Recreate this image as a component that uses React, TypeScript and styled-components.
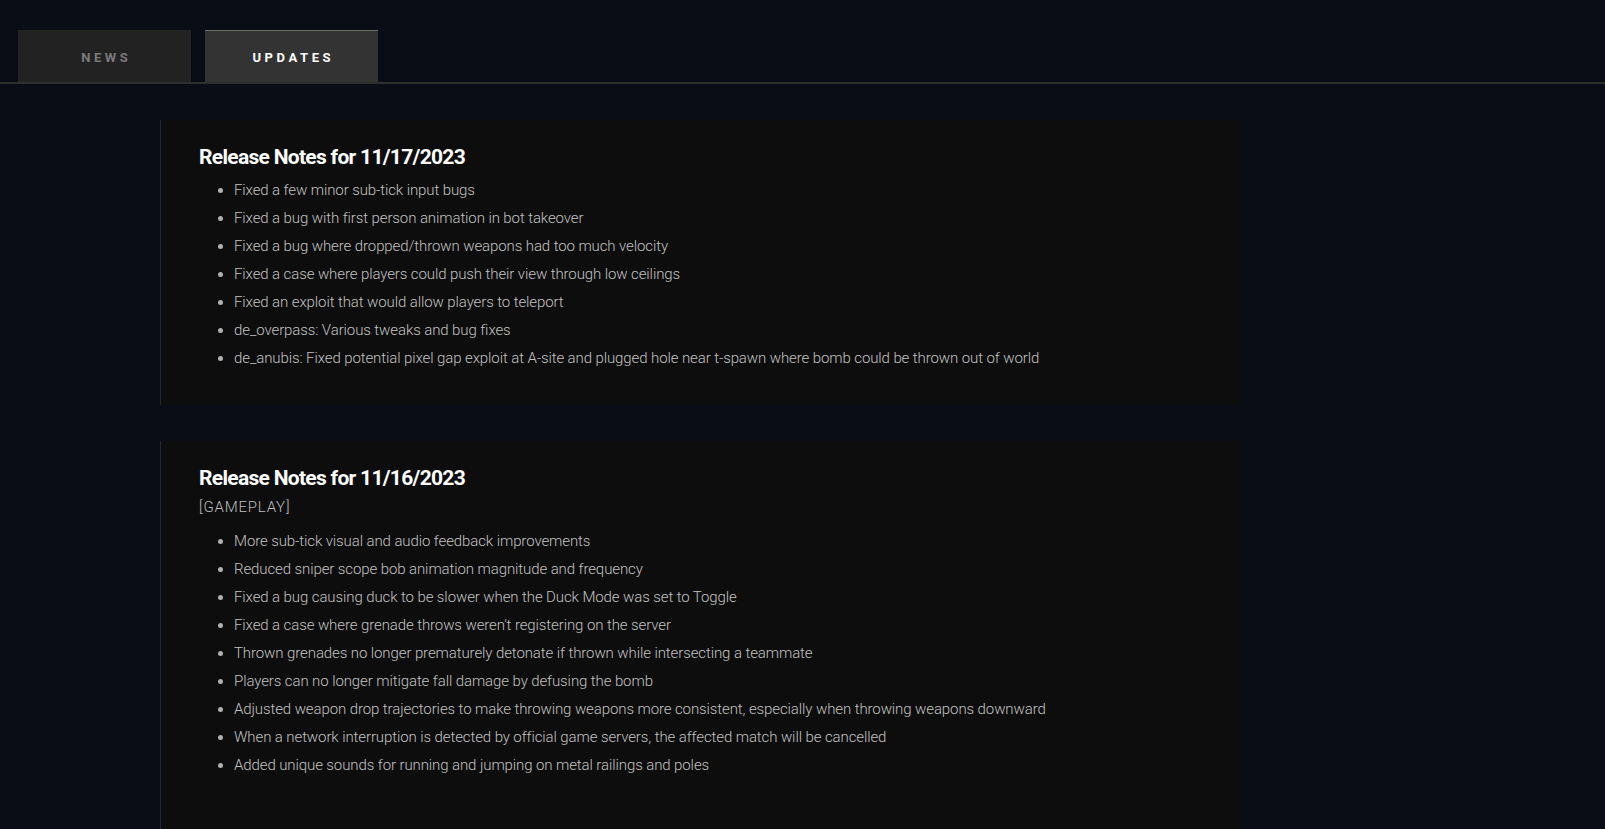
import React from "react";
import styled, { createGlobalStyle } from "styled-components";

const Global = createGlobalStyle`
  html, body { margin: 0; padding: 0; background: #0a0d15; }
  body { font-family: "Roboto", "Liberation Sans", sans-serif; overflow: hidden; }
`;

const Page = styled.div`
  min-height: 829px;
  background: #0a0d15;
`;

const TabBar = styled.div`
  display: flex;
  gap: 14px;
  padding: 30px 0 0 18px;
  border-bottom: 2px solid #2e2e2e;
`;

const Tab = styled.div<{ $active?: boolean }>`
  width: 173px;
  height: 52px;
  box-sizing: border-box;
  display: flex;
  align-items: center;
  justify-content: center;
  padding-top: 2px;
  background: ${(p) => (p.$active ? "#333333" : "#222222")};
  border-top: 1px solid ${(p) => (p.$active ? "#6b6b6b" : "#222222")};
  color: ${(p) => (p.$active ? "#ffffff" : "#7a7a7a")};
  font-family: "Roboto", sans-serif;
  font-weight: 700;
  font-size: 13px;
  letter-spacing: 3.6px;
  text-indent: 3.6px;
`;

const Feed = styled.div`
  display: flex;
  flex-direction: column;
  gap: 36px;
  padding: 36px 0 0 160px;
`;

const Card = styled.section<{ $tall?: boolean }>`
  width: 1080px;
  box-sizing: border-box;
  background: #0d0d0d;
  border-left: 1px solid #1f2633;
  padding: 24px 38px ${(p) => (p.$tall ? "90px" : "33px")} 38px;
`;

const Title = styled.h2`
  margin: 0 0 6px;
  font-family: "Roboto", sans-serif;
  font-weight: 700;
  font-size: 21px;
  line-height: 26px;
  color: #ffffff;
  letter-spacing: -0.7px;
`;

const Tag = styled.div`
  font-size: 15px;
  line-height: 20px;
  color: #bdbdbd;
  margin: 1px 0 10px;
  font-weight: 300;
  letter-spacing: 0.8px;
`;

const List = styled.ul`
  margin: 0;
  padding: 0 0 0 35px;
`;

const Item = styled.li`
  font-size: 15px;
  line-height: 28px;
  color: #c2c2c2;
  font-weight: 300;
  letter-spacing: -0.1px;
  &::marker { color: #b0b0b0; font-size: 15px; }
`;

const notes = [
  {
    title: "Release Notes for 11/17/2023",
    items: [
      "Fixed a few minor sub-tick input bugs",
      "Fixed a bug with first person animation in bot takeover",
      "Fixed a bug where dropped/thrown weapons had too much velocity",
      "Fixed a case where players could push their view through low ceilings",
      "Fixed an exploit that would allow players to teleport",
      "de_overpass: Various tweaks and bug fixes",
      "de_anubis: Fixed potential pixel gap exploit at A-site and plugged hole near t-spawn where bomb could be thrown out of world",
    ],
  },
  {
    title: "Release Notes for 11/16/2023",
    tag: "[GAMEPLAY]",
    tall: true,
    items: [
      "More sub-tick visual and audio feedback improvements",
      "Reduced sniper scope bob animation magnitude and frequency",
      "Fixed a bug causing duck to be slower when the Duck Mode was set to Toggle",
      "Fixed a case where grenade throws weren't registering on the server",
      "Thrown grenades no longer prematurely detonate if thrown while intersecting a teammate",
      "Players can no longer mitigate fall damage by defusing the bomb",
      "Adjusted weapon drop trajectories to make throwing weapons more consistent, especially when throwing weapons downward",
      "When a network interruption is detected by official game servers, the affected match will be cancelled",
      "Added unique sounds for running and jumping on metal railings and poles",
    ],
  },
];

export default function App() {
  return (
    <Page>
      <Global />
      <TabBar>
        <Tab>NEWS</Tab>
        <Tab $active>UPDATES</Tab>
      </TabBar>
      <Feed>
        {notes.map((n) => (
          <Card key={n.title} $tall={n.tall}>
            <Title>{n.title}</Title>
            {n.tag && <Tag>{n.tag}</Tag>}
            <List>
              {n.items.map((it) => (
                <Item key={it}>{it}</Item>
              ))}
            </List>
          </Card>
        ))}
      </Feed>
    </Page>
  );
}
